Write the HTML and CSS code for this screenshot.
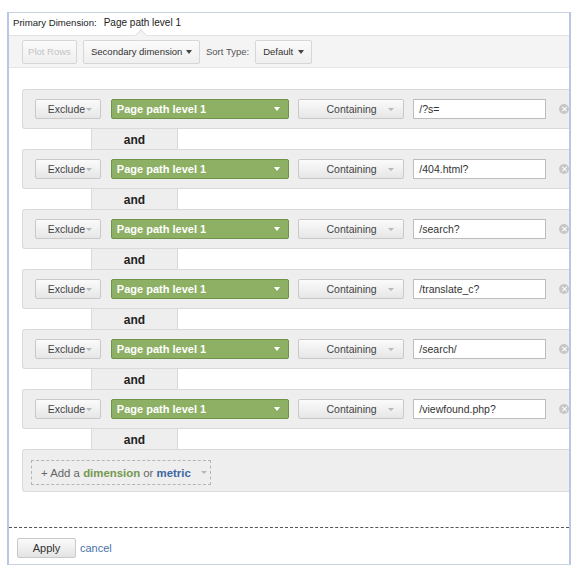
FILE: index.html
```html
<!DOCTYPE html>
<html>
<head>
<meta charset="utf-8">
<link rel="stylesheet" href="styles.css">
</head>
<body>
<div class="frame">
  <div class="header">
    <span class="hd-label">Primary Dimension:</span>
    <span class="hd-value">Page path level 1</span>
  </div>
  <div class="toolbar">
    <span class="notch"></span>
    <button class="tbtn plot">Plot Rows</button>
    <button class="tbtn secondary">Secondary dimension <i class="caret dark"></i></button>
    <span class="sort-label">Sort Type:</span>
    <button class="tbtn def">Default <i class="caret dark"></i></button>
  </div>

  <div class="filters">
    <div class="band">
      <div class="btn excl">Exclude<i class="caret light"></i></div>
      <div class="dim">Page path level 1<i class="caret white"></i></div>
      <div class="btn cont"><span>Containing</span><i class="caret light"></i></div>
      <div class="field">/?s=</div>
      <span class="close"></span>
    </div>
    <div class="and-row"><div class="and-gap"></div><div class="and">and</div></div>

    <div class="band">
      <div class="btn excl">Exclude<i class="caret light"></i></div>
      <div class="dim">Page path level 1<i class="caret white"></i></div>
      <div class="btn cont"><span>Containing</span><i class="caret light"></i></div>
      <div class="field">/404.html?</div>
      <span class="close"></span>
    </div>
    <div class="and-row"><div class="and-gap"></div><div class="and">and</div></div>

    <div class="band">
      <div class="btn excl">Exclude<i class="caret light"></i></div>
      <div class="dim">Page path level 1<i class="caret white"></i></div>
      <div class="btn cont"><span>Containing</span><i class="caret light"></i></div>
      <div class="field">/search?</div>
      <span class="close"></span>
    </div>
    <div class="and-row"><div class="and-gap"></div><div class="and">and</div></div>

    <div class="band">
      <div class="btn excl">Exclude<i class="caret light"></i></div>
      <div class="dim">Page path level 1<i class="caret white"></i></div>
      <div class="btn cont"><span>Containing</span><i class="caret light"></i></div>
      <div class="field">/translate_c?</div>
      <span class="close"></span>
    </div>
    <div class="and-row"><div class="and-gap"></div><div class="and">and</div></div>

    <div class="band">
      <div class="btn excl">Exclude<i class="caret light"></i></div>
      <div class="dim">Page path level 1<i class="caret white"></i></div>
      <div class="btn cont"><span>Containing</span><i class="caret light"></i></div>
      <div class="field">/search/</div>
      <span class="close"></span>
    </div>
    <div class="and-row"><div class="and-gap"></div><div class="and">and</div></div>

    <div class="band">
      <div class="btn excl">Exclude<i class="caret light"></i></div>
      <div class="dim">Page path level 1<i class="caret white"></i></div>
      <div class="btn cont"><span>Containing</span><i class="caret light"></i></div>
      <div class="field">/viewfound.php?</div>
      <span class="close"></span>
    </div>
    <div class="and-row"><div class="and-gap"></div><div class="and">and</div></div>

    <div class="band add-band">
      <div class="add">+ Add a <b class="g">dimension</b> or <b class="b">metric</b><i class="caret light"></i></div>
    </div>
  </div>

  <div class="footer">
    <button class="apply">Apply</button>
    <a class="cancel">cancel</a>
  </div>
</div>
</body>
</html>
```

FILE: styles.css
```css
* { box-sizing: border-box; }
html, body { margin: 0; padding: 0; background: #fff; }
body { font-family: "Liberation Sans", Arial, sans-serif; color: #333; }

.frame {
  margin: 12px 0 0 7px;
  width: 564px;
  height: 553px;
  border: 1px solid #c8d2e2;
  border-left: 2px solid #b8c7e6;
  border-right: 2px solid #b8c7e6;
  background: #fff;
}

.header {
  height: 22px;
  line-height: 20px;
  padding-left: 4px;
  font-size: 9.6px;
  color: #222;
  display: flex;
  gap: 7px;
}
.hd-value { font-size: 10px; }

.toolbar {
  position: relative;
  height: 33px;
  background: #f4f4f4;
  border-top: 1px solid #e2e2e2;
  border-bottom: 1px solid #e6e6e6;
  display: flex;
  align-items: center;
  padding-left: 13px;
  font-size: 9.5px;
}
.notch {
  position: absolute;
  left: 128px;
  top: -5px;
  width: 8px;
  height: 8px;
  background: #f4f4f4;
  border-left: 1px solid #e2e2e2;
  border-top: 1px solid #e2e2e2;
  transform: rotate(45deg);
}
.tbtn {
  font-family: inherit;
  font-size: 9.5px;
  height: 24px;
  border: 1px solid #d6d6d6;
  border-radius: 2px;
  background: linear-gradient(#fafafa, #efefef);
  color: #333;
  padding: 0 7px;
  display: flex;
  align-items: center;
  justify-content: space-between;
  margin: 0;
  white-space: nowrap;
}
.plot { width: 55px; color: #c4c4c4; justify-content: center; padding: 0; }
.secondary { width: 117px; margin-left: 6px; }
.sort-label { margin-left: 6px; color: #555; }
.def { width: 57px; margin-left: 6px; }

.caret {
  display: inline-block;
  width: 0; height: 0;
  border-left: 3.5px solid transparent;
  border-right: 3.5px solid transparent;
  border-top: 4px solid #444;
}
.caret.light { border-top-color: #b8b8b8; border-left-width: 3px; border-right-width: 3px; border-top-width: 3px; }
.caret.white { border-top-color: #fff; }

.filters {
  margin: 21px 0 0 13px;
}
.band {
  height: 40px;
  background: #eeeeee;
  border: 1px solid #dadada;
  border-right: none;
  border-radius: 3px 0 0 3px;
  display: flex;
  align-items: center;
  padding-left: 12px;
}
.btn {
  height: 20px;
  border: 1px solid #c9c9c9;
  border-radius: 2px;
  background: linear-gradient(#fbfbfb, #e6e6e6);
  font-size: 10.5px;
  color: #444;
  display: flex;
  align-items: center;
}
.excl { width: 66px; justify-content: center; gap: 1px; padding-left: 4px; }
.cont { width: 106px; margin-left: 9px; padding: 0 9px 0 27px; justify-content: space-between; }
.dim {
  width: 179px;
  height: 20px;
  margin-left: 10px;
  background: #8db064;
  border: 1px solid #6e9249;
  border-radius: 2px;
  color: #fff;
  font-weight: bold;
  font-size: 11px;
  display: flex;
  align-items: center;
  justify-content: space-between;
  padding: 0 8px 0 5px;
}
.field {
  width: 133px;
  height: 20px;
  margin-left: 9px;
  background: #fff;
  border: 1px solid #bdbdbd;
  font-size: 10.5px;
  color: #333;
  padding-left: 5px;
  line-height: 18px;
}
.close {
  position: relative;
  width: 10px;
  height: 10px;
  margin-left: 13px;
  border-radius: 50%;
  background: #c6c6c6;
}
.close::before, .close::after {
  content: "";
  position: absolute;
  left: 4.5px; top: 2px;
  width: 1px; height: 6px;
  background: #fff;
  transform: rotate(45deg);
}
.close::after { transform: rotate(-45deg); }

.and-row {
  height: 20px;
  display: flex;
}
.and-gap { width: 69px; }
.and {
  width: 87px;
  background: #eeeeee;
  border-left: 1px solid #d9d9d9;
  border-right: 1px solid #d9d9d9;
  font-weight: bold;
  font-size: 12px;
  color: #222;
  text-align: center;
  line-height: 22px;
}

.add-band { height: 43px; padding-left: 8px; align-items: flex-start; padding-top: 10px; }
.add {
  width: 180px;
  height: 25px;
  border: 1px dashed #b5b5b5;
  font-size: 11.4px;
  color: #666;
  display: flex;
  align-items: center;
  padding-left: 9px;
  white-space: pre;
}
.add .g { color: #74984f; font-weight: bold; }
.add .b { color: #3d67a3; font-weight: bold; }
.add .caret { margin-left: 10px; }

.footer {
  margin-top: 35px;
  border-top: 1px dashed #555;
  padding: 10px 0 0 8px;
  display: flex;
  align-items: center;
}
.apply {
  font-family: inherit;
  width: 59px;
  height: 20px;
  margin: 0;
  border: 1px solid #c9c9c9;
  border-radius: 2px;
  background: linear-gradient(#fbfbfb, #e3e3e3);
  font-size: 11px;
  color: #333;
}
.cancel { margin-left: 4px; font-size: 11px; color: #4a72a8; }
```
